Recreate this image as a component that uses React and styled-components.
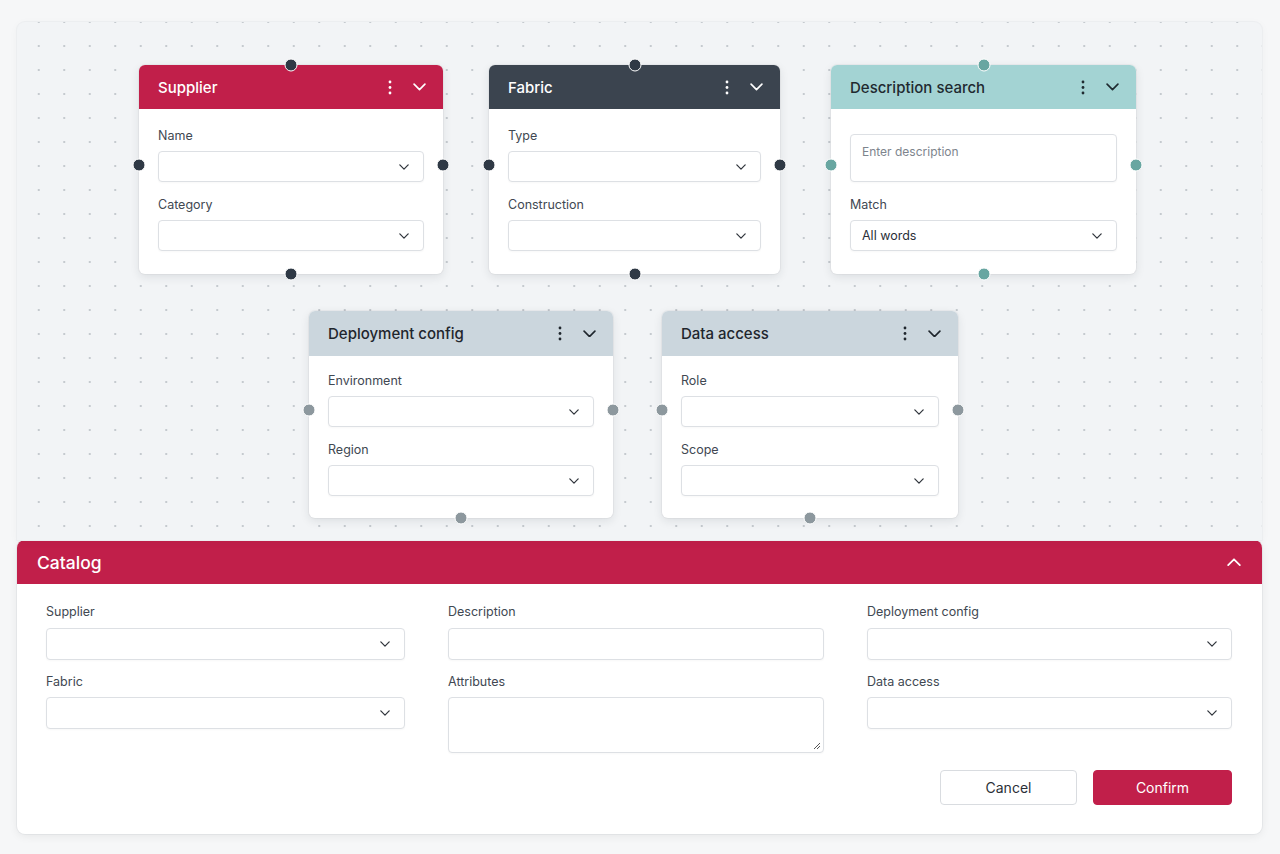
import React from "react";
import styled, { createGlobalStyle } from "styled-components";

const colors = {
  crimson: "#c11f4a",
  slate: "#3b444f",
  teal: "#a3d3d3",
  mist: "#cbd6dd",
  text: "#2b3038",
  label: "#414852",
  border: "#dde0e4",
};

const GlobalStyle = createGlobalStyle`
  * { box-sizing: border-box; }
  body {
    margin: 0;
    background: #f6f7f8;
    font-family: Inter, "Noto Sans", sans-serif;
    color: ${colors.text};
  }
`;

const Page = styled.div`
  width: 1280px;
  height: 854px;
  padding: 22px 18px 0 17px;
  display: flex;
  flex-direction: column;
`;

const Canvas = styled.div`
  position: relative;
  height: 518px;
  border-radius: 8px 8px 0 0;
  background-color: #f2f4f6;
  background-image: radial-gradient(circle, #c5cacf 1.1px, transparent 1.5px);
  background-size: 25.5px 24px;
  background-position: 9px 12px;
  box-shadow: 0 0 0 1px #eceef0, 0 2px 10px rgba(0, 0, 0, 0.04);
`;

const Node = styled.div`
  position: absolute;
  background: #fff;
  border-radius: 6px;
  box-shadow: 0 3px 10px rgba(30, 40, 50, 0.1), 0 0 0 1px rgba(0, 0, 0, 0.03);
`;

const NodeHeader = styled.div`
  height: ${(p) => p.$h}px;
  display: flex;
  align-items: center;
  padding: 0 17px 0 19px;
  border-radius: 6px 6px 0 0;
  background: ${(p) => p.$bg};
  color: ${(p) => p.$fg};
`;

const NodeTitle = styled.div`
  flex: 1;
  font-size: 15px;
  font-weight: 500;
`;

const HeaderIcons = styled.div`
  display: flex;
  align-items: center;
  gap: 21px;
`;

const NodeBody = styled.div`
  padding: ${(p) => p.$pt}px 19px ${(p) => p.$pb}px;
  display: flex;
  flex-direction: column;
`;

const Field = styled.div`
  display: flex;
  flex-direction: column;
  & + & {
    margin-top: 15px;
  }
`;

const Label = styled.div`
  font-size: 12.5px;
  line-height: 16px;
  color: ${colors.label};
  margin-bottom: ${(p) => p.$gap || 7}px;
`;

const SelectBox = styled.div`
  height: ${(p) => p.$h || 31}px;
  border: 1px solid ${colors.border};
  border-radius: 4px;
  background: #fff;
  display: flex;
  align-items: center;
  padding: 0 14px 0 11px;
  font-size: 12.5px;
  color: ${colors.text};
  box-shadow: 0 1px 2px rgba(0, 0, 0, 0.03);
`;

const SelectValue = styled.div`
  flex: 1;
`;

const TextBox = styled.div`
  position: relative;
  height: ${(p) => p.$h}px;
  margin-top: ${(p) => p.$mt || 0}px;
  border: 1px solid ${colors.border};
  border-radius: 4px;
  background: #fff;
  padding: 9px 11px;
  font-size: 12px;
  color: #7d848d;
  box-shadow: 0 1px 2px rgba(0, 0, 0, 0.03);
`;

const Grip = styled.svg`
  position: absolute;
  right: 2px;
  bottom: 2px;
`;

const Handle = styled.div`
  position: absolute;
  width: 13px;
  height: 13px;
  border-radius: 50%;
  background: ${(p) => p.$c};
  border: 1.5px solid #fff;
  transform: translate(-50%, -50%);
`;

const Panel = styled.div`
  height: 294px;
  background: #fff;
  border-radius: 8px;
  box-shadow: 0 2px 10px rgba(0, 0, 0, 0.07), 0 0 0 1px #eceef0;
  display: flex;
  flex-direction: column;
`;

const PanelHeader = styled.div`
  height: 44px;
  background: ${colors.crimson};
  border-radius: 8px 8px 0 0;
  display: flex;
  align-items: center;
  justify-content: space-between;
  padding: 0 21px 0 20px;
  color: #fff;
  font-size: 17.5px;
  font-weight: 500;
`;

const PanelBody = styled.div`
  padding: 20px 30px 0 29px;
`;

const FormGrid = styled.div`
  display: grid;
  grid-template-columns: 359px 376px 1fr;
  column-gap: 43px;
  align-items: start;
`;

const Column = styled.div`
  display: flex;
  flex-direction: column;
  & > div + div {
    margin-top: 14px;
  }
`;

const PanelField = styled.div`
  display: flex;
  flex-direction: column;
`;

const Actions = styled.div`
  display: flex;
  justify-content: flex-end;
  gap: 16px;
  margin-top: 17px;
`;

const Button = styled.button`
  width: ${(p) => p.$w}px;
  height: 35px;
  border-radius: 4px;
  font-family: inherit;
  font-size: 14px;
  cursor: pointer;
  border: 1px solid ${(p) => (p.$primary ? colors.crimson : "#d9dce0")};
  background: ${(p) => (p.$primary ? colors.crimson : "#fff")};
  color: ${(p) => (p.$primary ? "#fff" : colors.text)};
`;

const Chevron = ({ up, size = 12, stroke = "currentColor", width = 1.6 }) => (
  <svg width={size} height={size * 0.6} viewBox="0 0 12 7" fill="none">
    <polyline
      points={up ? "1,6 6,1 11,6" : "1,1 6,6 11,1"}
      stroke={stroke}
      strokeWidth={width}
      strokeLinecap="round"
      strokeLinejoin="round"
    />
  </svg>
);

const Kebab = () => (
  <svg width="4" height="15" viewBox="0 0 4 15" fill="currentColor">
    <circle cx="2" cy="2" r="1.4" />
    <circle cx="2" cy="7.5" r="1.4" />
    <circle cx="2" cy="13" r="1.4" />
  </svg>
);

const Select = ({ value, h }) => (
  <SelectBox $h={h}>
    <SelectValue>{value}</SelectValue>
    <Chevron size={10} stroke="#30353c" width={1.5} />
  </SelectBox>
);

const NODES = [
  {
    id: "supplier", title: "Supplier", x: 122, y: 43, w: 304, bg: colors.crimson, fg: "#fff",
    handle: "#2f3945", sideY: 100, top: true, hh: 44, pt: 19, pb: 23,
    fields: [{ label: "Name" }, { label: "Category" }],
  },
  {
    id: "fabric", title: "Fabric", x: 472, y: 43, w: 291, bg: colors.slate, fg: "#fff",
    handle: "#2f3945", sideY: 100, top: true, hh: 44, pt: 19, pb: 23,
    fields: [{ label: "Type" }, { label: "Construction" }],
  },
  {
    id: "desc", title: "Description search", x: 814, y: 43, w: 305, bg: colors.teal, fg: "#1f2a30",
    handle: "#68a6a1", sideY: 100, top: true, hh: 44, pt: 19, pb: 23,
    fields: [{ text: "Enter description" }, { label: "Match", value: "All words" }],
  },
  {
    id: "deploy", title: "Deployment config", x: 292, y: 289, w: 304, bg: colors.mist, fg: "#1f262d",
    handle: "#8d989e", sideY: 99, top: false, hh: 45, pt: 17, pb: 22,
    fields: [{ label: "Environment" }, { label: "Region" }],
  },
  {
    id: "data", title: "Data access", x: 645, y: 289, w: 296, bg: colors.mist, fg: "#1f262d",
    handle: "#8d989e", sideY: 99, top: false, hh: 45, pt: 17, pb: 22,
    fields: [{ label: "Role" }, { label: "Scope" }],
  },
];

const FlowNode = ({ node }) => (
  <Node style={{ left: node.x, top: node.y, width: node.w }}>
    <NodeHeader $bg={node.bg} $fg={node.fg} $h={node.hh}>
      <NodeTitle>{node.title}</NodeTitle>
      <HeaderIcons>
        <Kebab />
        <Chevron size={13} width={1.5} />
      </HeaderIcons>
    </NodeHeader>
    <NodeBody $pt={node.pt} $pb={node.pb}>
      {node.fields.map((f, i) =>
        f.text ? (
          <Field key={i}>
            <TextBox $h={48} $mt={6}>{f.text}</TextBox>
          </Field>
        ) : (
          <Field key={i}>
            <Label>{f.label}</Label>
            <Select value={f.value} />
          </Field>
        )
      )}
    </NodeBody>
    {node.top && <Handle $c={node.handle} style={{ left: "50%", top: 0 }} />}
    <Handle $c={node.handle} style={{ left: 0, top: node.sideY }} />
    <Handle $c={node.handle} style={{ left: "100%", top: node.sideY }} />
    <Handle $c={node.handle} style={{ left: "50%", top: "100%" }} />
  </Node>
);

export default function App() {
  return (
    <>
      <GlobalStyle />
      <Page>
        <Canvas>
          {NODES.map((n) => (
            <FlowNode node={n} key={n.id} />
          ))}
        </Canvas>
        <Panel>
          <PanelHeader>
            Catalog
            <Chevron up size={14} width={1.5} />
          </PanelHeader>
          <PanelBody>
            <FormGrid>
              <Column>
                <PanelField>
                  <Label $gap={8}>Supplier</Label>
                  <Select h={32} />
                </PanelField>
                <PanelField>
                  <Label $gap={7}>Fabric</Label>
                  <Select h={32} />
                </PanelField>
              </Column>
              <Column>
                <PanelField>
                  <Label $gap={8}>Description</Label>
                  <TextBox $h={32} />
                </PanelField>
                <PanelField>
                  <Label $gap={7}>Attributes</Label>
                  <TextBox $h={56}>
                    <Grip width="8" height="8" viewBox="0 0 8 8">
                      <line x1="1" y1="7" x2="7" y2="1" stroke="#555" strokeWidth="1" />
                      <line x1="4" y1="7" x2="7" y2="4" stroke="#555" strokeWidth="1" />
                    </Grip>
                  </TextBox>
                </PanelField>
              </Column>
              <Column>
                <PanelField>
                  <Label $gap={8}>Deployment config</Label>
                  <Select h={32} />
                </PanelField>
                <PanelField>
                  <Label $gap={7}>Data access</Label>
                  <Select h={32} />
                </PanelField>
              </Column>
            </FormGrid>
            <Actions>
              <Button $w={137}>Cancel</Button>
              <Button $w={139} $primary>Confirm</Button>
            </Actions>
          </PanelBody>
        </Panel>
      </Page>
    </>
  );
}
